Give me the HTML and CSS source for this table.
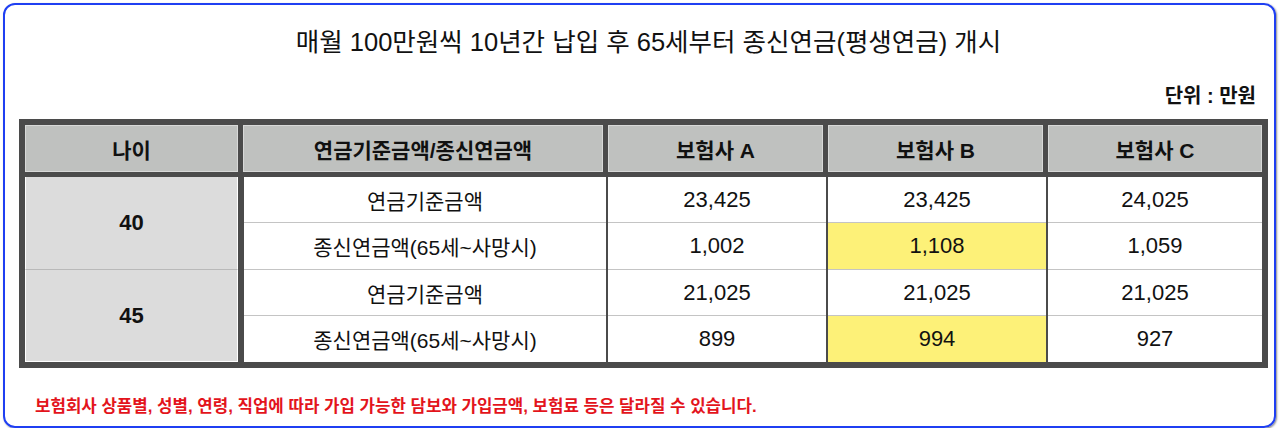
FILE: index.html
```html
<!DOCTYPE html>
<html lang="ko">
<head>
<meta charset="utf-8">
<link rel="stylesheet" href="styles.css">
</head>
<body>
<div class="card">
  <h1 class="title">매월 100만원씩 10년간 납입 후 65세부터 종신연금(평생연금) 개시</h1>
  <div class="unit">단위 : 만원</div>
  <div class="table">
    <div class="thead">
      <div class="th">나이</div>
      <div class="th">연금기준금액/종신연금액</div>
      <div class="th">보험사 A</div>
      <div class="th">보험사 B</div>
      <div class="th">보험사 C</div>
    </div>
    <div class="tbody">
      <div class="ages">
        <div class="age first">40</div>
        <div class="age">45</div>
      </div>
      <div class="data">
        <div class="td label">연금기준금액</div>
        <div class="td num">23,425</div>
        <div class="td num">23,425</div>
        <div class="td num">24,025</div>

        <div class="td label">종신연금액(65세~사망시)</div>
        <div class="td num">1,002</div>
        <div class="td num hl">1,108</div>
        <div class="td num">1,059</div>

        <div class="td label">연금기준금액</div>
        <div class="td num">21,025</div>
        <div class="td num">21,025</div>
        <div class="td num">21,025</div>

        <div class="td label last">종신연금액(65세~사망시)</div>
        <div class="td num last">899</div>
        <div class="td num hl last">994</div>
        <div class="td num last">927</div>
      </div>
    </div>
  </div>
  <p class="note">보험회사 상품별, 성별, 연령, 직업에 따라 가입 가능한 담보와 가입금액, 보험료 등은 달라질 수 있습니다.</p>
</div>
</body>
</html>
```

FILE: styles.css
```css
html, body {
  margin: 0;
  padding: 0;
  background: #ffffff;
}

body {
  font-family: "Liberation Sans", "Noto Sans CJK KR", sans-serif;
  color: #111111;
}

.card {
  box-sizing: border-box;
  margin: 3px 0 0 3px;
  width: 1273px;
  height: 425px;
  border: 2px solid #1f3ff2;
  border-radius: 12px;
  box-shadow: 1px 1px 2px rgba(0, 0, 0, 0.45);
  padding: 21px 6px 0 14px;
  display: flex;
  flex-direction: column;
}

.title {
  margin: 0;
  font-size: 25.5px;
  line-height: 32px;
  font-weight: normal;
  text-align: center;
  padding-left: 10px;
}

.unit {
  margin-top: 25px;
  font-size: 20px;
  line-height: 26px;
  font-weight: bold;
  text-align: right;
  padding-right: 12px;
}

.table {
  margin-top: 10px;
  box-sizing: border-box;
  width: 1249px;
  background: #4b4b4b;
  padding: 6px;
}

.thead {
  display: grid;
  grid-template-columns: 213px 360px 215px 215px 214px;
  column-gap: 5px;
  height: 47px;
}

.th {
  box-sizing: border-box;
  background: #bfc1bf;
  border: 1px solid #d8d9d8;
  display: flex;
  align-items: center;
  justify-content: center;
  font-weight: bold;
  font-size: 21px;
}

.tbody {
  margin-top: 5px;
  display: grid;
  grid-template-columns: 213px 1018px;
  column-gap: 6px;
}

.ages {
  display: grid;
  grid-template-rows: 93px 92px;
}

.age {
  box-sizing: border-box;
  background: #dcdcdc;
  border: 1px solid #ffffff;
  border-top: none;
  display: flex;
  align-items: center;
  justify-content: center;
  font-weight: bold;
  font-size: 22px;
}

.age.first {
  border-bottom: 1px solid #b9b9b9;
}

.data {
  display: grid;
  grid-template-columns: 362px 218px 218px 214px;
  grid-template-rows: 46px 47px 46px 46px;
  column-gap: 2px;
}

.td {
  box-sizing: border-box;
  background: #ffffff;
  border-bottom: 1px solid #c4c4c4;
  display: flex;
  align-items: center;
  justify-content: center;
}

.td.last {
  border-bottom: none;
}

.label {
  font-size: 21px;
}

.num {
  font-size: 22px;
}

.hl {
  background: #fdf178;
}

.note {
  margin: 29px 0 0 0;
  padding-left: 16px;
  font-size: 16.8px;
  line-height: 20px;
  font-weight: bold;
  color: #e3141c;
}
```
